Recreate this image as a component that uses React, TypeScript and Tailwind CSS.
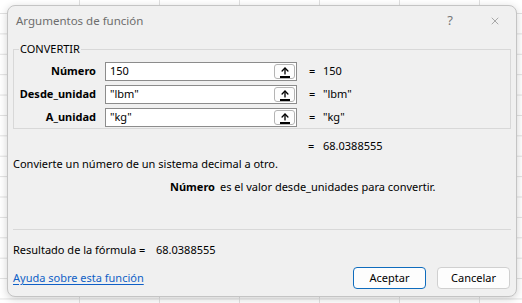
import { ArrowUp, X } from "lucide-react";

const ARGS = [
  { label: "Número", value: "150", result: "150" },
  { label: "Desde_unidad", value: '"lbm"', result: '"lbm"' },
  { label: "A_unidad", value: '"kg"', result: '"kg"' },
];

function RefButton() {
  return (
    <div className="absolute right-[1px] top-[1px] bottom-[1px] w-[21px] rounded-[3px] border border-[#b4b4b4] bg-[#fdfdfd] flex flex-col items-center justify-center">
      <ArrowUp className="w-[10px] h-[10px] text-black" strokeWidth={3.2} />
      <div className="w-[10px] h-[1.5px] bg-black mt-[0.5px]" />
    </div>
  );
}

export default function App() {
  return (
    <div
      className="relative w-[522px] h-[303px] overflow-hidden bg-white bg-[linear-gradient(to_right,#e1e1e1_1px,transparent_1px),linear-gradient(to_bottom,#e1e1e1_1px,transparent_1px)] bg-[size:80px_20.4px] bg-[position:79px_13px] pl-[7px] pt-[5px] text-[11px] text-black"
      style={{ fontFamily: '"Segoe UI", "Noto Sans", sans-serif' }}
    >
      <span className="absolute left-[8px] top-[131px] text-[12px]">k</span>

      <div className="relative w-[510px] h-[292px] rounded-[8px] border border-[#c4c4c4] bg-[#f0f0f0] shadow-[0_2px_8px_rgba(0,0,0,0.18)] flex flex-col">
        {/* title bar */}
        <div className="h-[32px] flex items-center pl-[8px] pr-[15px]">
          <span className="text-[11.5px] text-[#6d6d6d] mt-[-2px]">Argumentos de función</span>
          <span className="ml-auto mr-[36px] text-[13px] text-[#777] mt-[-2px]">?</span>
          <X className="w-[12px] h-[12px] text-[#777] mt-[-2px]" strokeWidth={1.2} />
        </div>

        {/* group box */}
        <fieldset className="mx-[5px] mt-[4px] h-[87px] border border-[#d8d8d8] pt-[6px]">
          <legend className="ml-[5px] px-[1px] leading-[14px]">CONVERTIR</legend>
          <div className="flex flex-col gap-[4px]">
            {ARGS.map((a) => (
              <div key={a.label} className="flex items-center h-[19px]">
                <div className="w-[91px] text-right font-bold pr-[9px]">{a.label}</div>
                <div className="relative w-[192px] h-[19px] border border-[#8c8c8c] bg-white pl-[4px] flex items-center">
                  {a.value}
                  <RefButton />
                </div>
                <span className="ml-[12px] w-[14px]">=</span>
                <span>{a.result}</span>
              </div>
            ))}
          </div>
        </fieldset>

        {/* result */}
        <div className="h-[18px] flex items-center pl-[300px] mt-[8px]">
          <span className="w-[15px]">=</span>
          <span>68.0388555</span>
        </div>
        <div className="pl-[5px] h-[17px] leading-[17px]">Convierte un número de un sistema decimal a otro.</div>
        <div className="pl-[162px] mt-[6px] h-[17px] leading-[17px] flex">
          <span className="font-bold w-[50px]">Número</span>
          <span>es el valor desde_unidades para convertir.</span>
        </div>

        <div className="mt-auto mx-[5px] border-t border-[#d8d8d8]" />
        <div className="pl-[5px] mt-[11px] h-[17px] leading-[17px] flex">
          <span className="w-[143px] whitespace-nowrap">Resultado de la fórmula =</span>
          <span>68.0388555</span>
        </div>
        <div className="flex items-center pl-[5px] pr-[6px] mt-[9px] mb-[7px]">
          <a className="text-[#0f5fc6] underline underline-offset-2">Ayuda sobre esta función</a>
          <button className="ml-auto w-[73px] h-[22px] rounded-[4px] border border-[#0f6cbd] bg-[#fdfdfd]">Aceptar</button>
          <button className="ml-[11px] w-[73px] h-[22px] rounded-[4px] border border-[#d0d0d0] bg-[#fdfdfd]">Cancelar</button>
        </div>
      </div>
    </div>
  );
}
